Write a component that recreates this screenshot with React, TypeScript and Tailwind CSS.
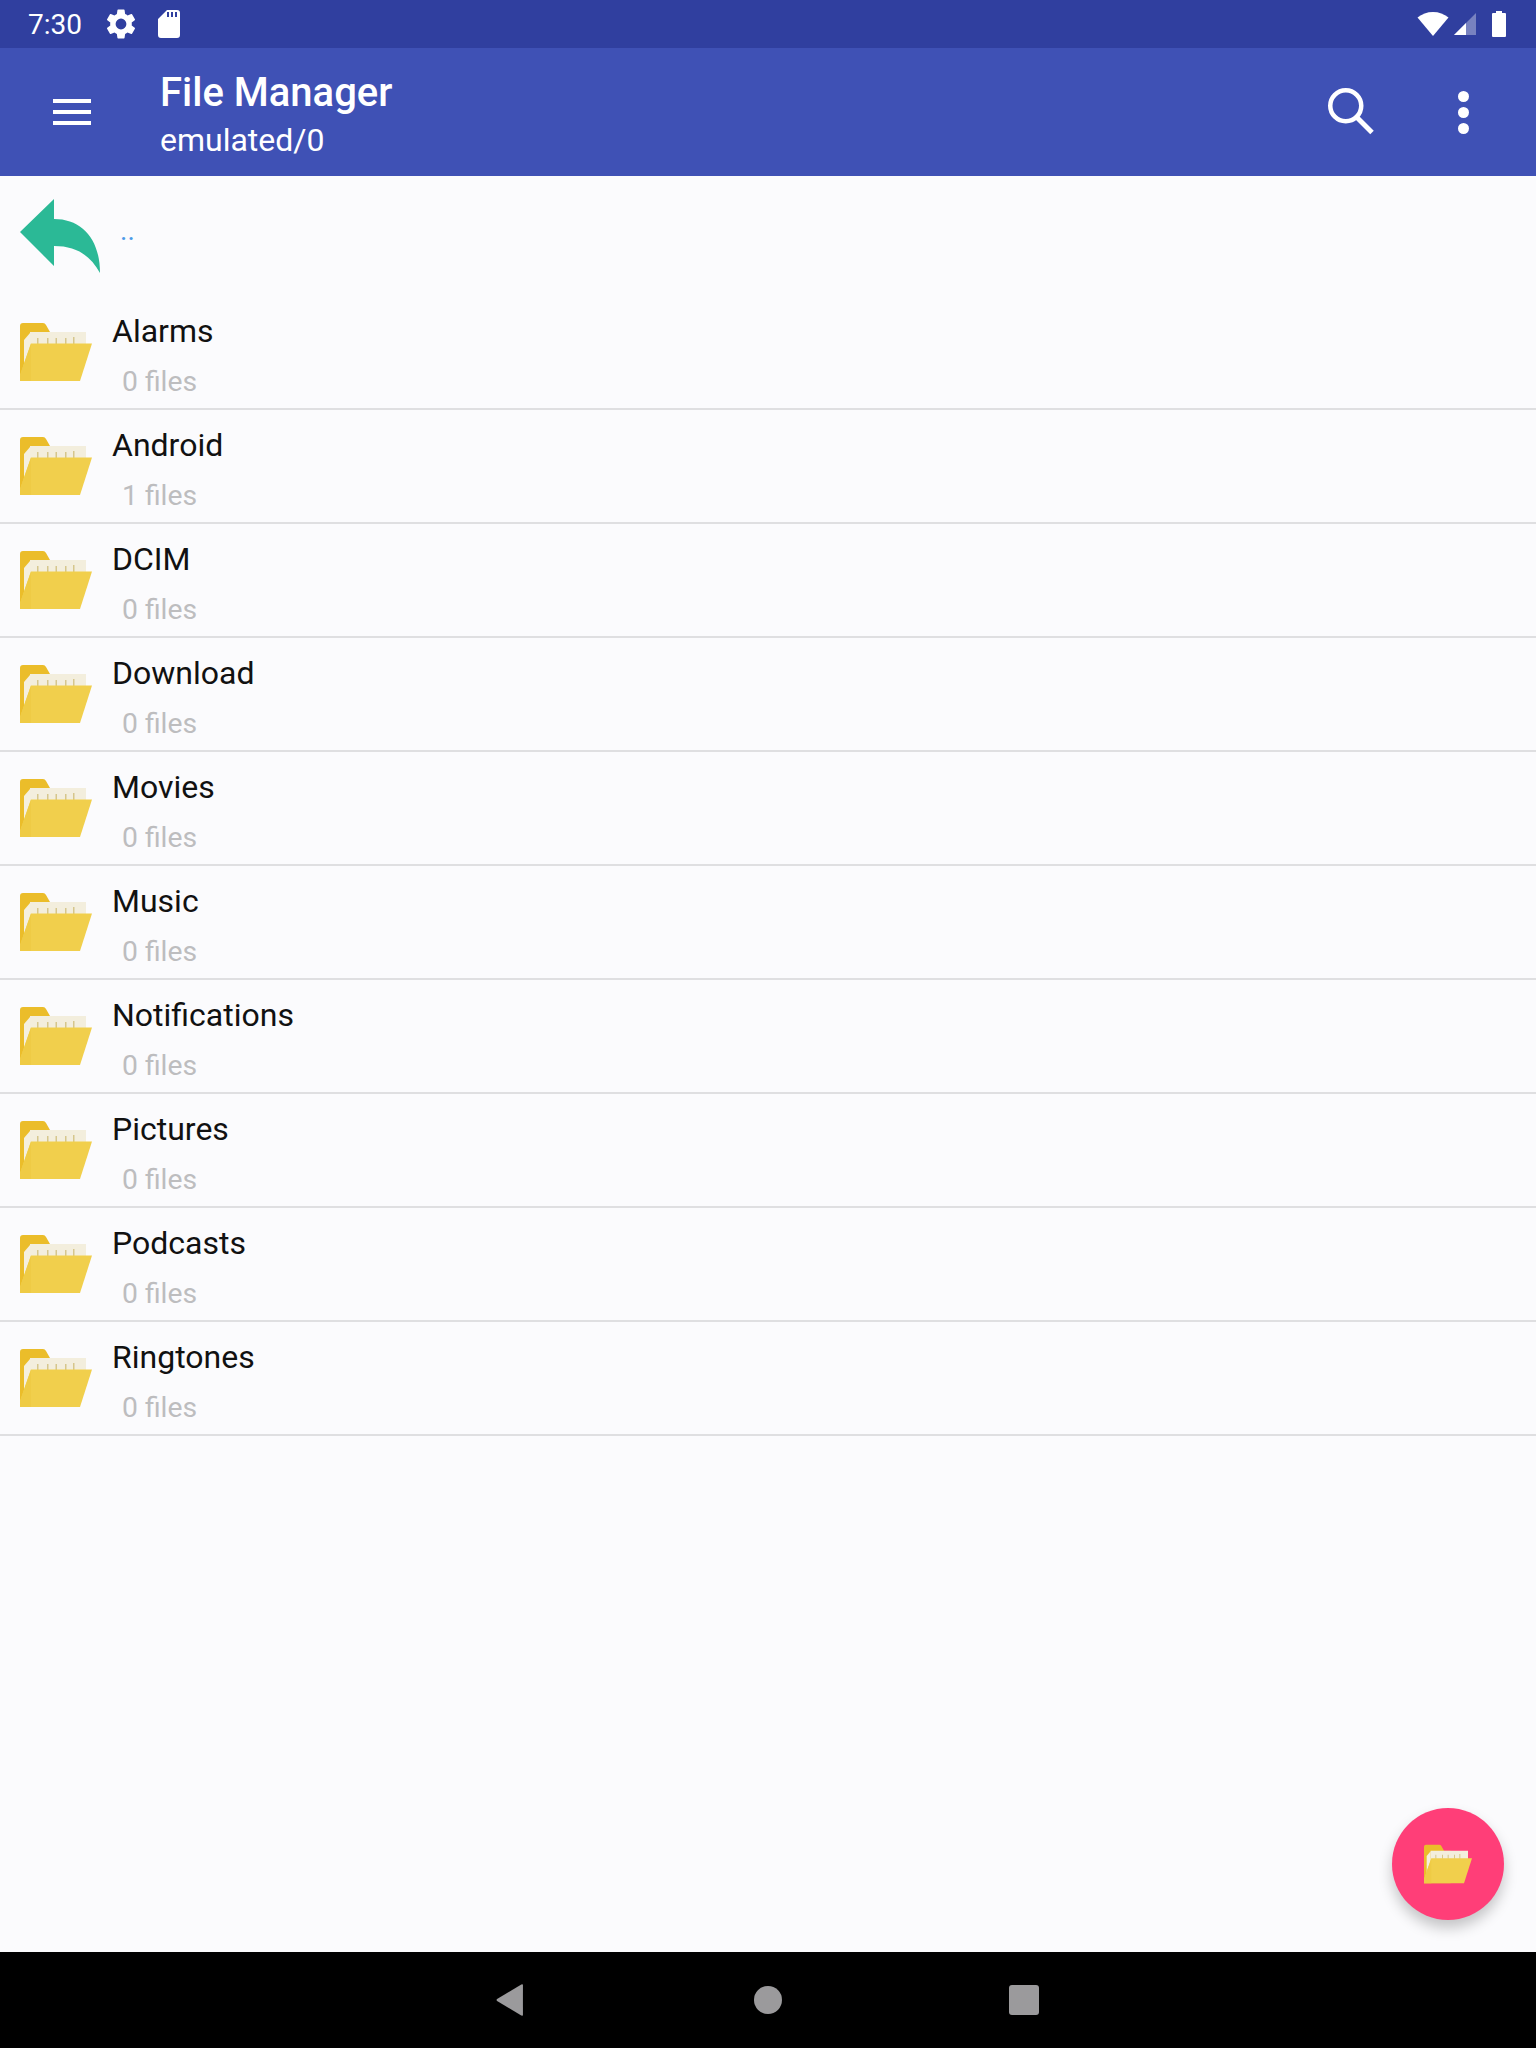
import React from "react";

function Folder({ className = "" }: { className?: string }) {
  return (
    <svg viewBox="0 0 72 58" className={className}>
      <path d="M0 58V3Q0 0 3 0H23Q25 0 26 2L30 9H40V58Z" fill="#EBBD2A" />
      <path d="M10 9H66V24H10Z" fill="#F3EEDD" />
      <path d="M4 44V17L10 10V30Z" fill="#F5F0DF" />
      <path d="M17 15h1.500v6H17zM27 15h1.500v6H27zM35.500 15h1.500v6h-1.500zM45 15h1.500v6H45zM53 14h1.500v7H53z" fill="#D6C68C" />
      <path d="M11 20.500H72L60 58H0V52Z" fill="#F1CF4C" />
      <path d="M0 52L11 20.500V58H0Z" fill="#EFCB45" />
    </svg>
  );
}

const rows = [
  ["Alarms", "0 files"],
  ["Android", "1 files"],
  ["DCIM", "0 files"],
  ["Download", "0 files"],
  ["Movies", "0 files"],
  ["Music", "0 files"],
  ["Notifications", "0 files"],
  ["Pictures", "0 files"],
  ["Podcasts", "0 files"],
  ["Ringtones", "0 files"],
];

export default function App() {
  return (
    <div className="relative flex h-[2048px] w-[1536px] flex-col overflow-hidden bg-[#FBFBFD] font-['Roboto',sans-serif]">
      <div className="flex h-12 shrink-0 items-center bg-[#303F9F] pl-7 pr-[30px] text-white">
        <span className="mt-[2px] text-[28px] leading-none">7:30</span>
        <svg viewBox="0 0 24 24" className="ml-[21px] h-9 w-9" fill="white">
          <path d="M19.14 12.94c.04-.3.06-.61.06-.94s-.02-.64-.07-.94l2.03-1.58a.49.49 0 0 0 .12-.61l-1.92-3.32a.49.49 0 0 0-.59-.22l-2.39.96a7 7 0 0 0-1.62-.94l-.36-2.54a.48.48 0 0 0-.48-.41h-3.84a.47.47 0 0 0-.47.41l-.36 2.54c-.59.24-1.13.57-1.62.94l-2.39-.96a.48.48 0 0 0-.59.22L2.74 8.87a.47.47 0 0 0 .12.61l2.03 1.58c-.05.3-.09.63-.09.94s.02.64.07.94l-2.03 1.58a.49.49 0 0 0-.12.61l1.92 3.32c.12.22.37.29.59.22l2.39-.96c.5.38 1.03.7 1.62.94l.36 2.54c.05.24.24.41.48.41h3.84c.24 0 .44-.17.47-.41l.36-2.54c.59-.24 1.13-.56 1.62-.94l2.39.96c.22.08.47 0 .59-.22l1.92-3.32a.47.47 0 0 0-.12-.61l-2.01-1.58zM12 15.6A3.6 3.6 0 1 1 12 8.4a3.6 3.6 0 0 1 0 7.2z" />
        </svg>
        <svg viewBox="0 0 22 28" className="ml-[19px] h-7 w-[22px]" fill="white">
          <path d="M9 0H19Q22 0 22 3V25Q22 28 19 28H3Q0 28 0 25V9ZM9 2V7H11V2ZM13 2V7H15V2ZM17 2V7H19V2Z" fillRule="evenodd" />
        </svg>
        <div className="flex-1" />
        <svg viewBox="0 0 32 24" className="h-6 w-8" fill="white">
          <path d="M16 24L0.500 5.500C5 2 10 0 16 0S27 2 31.500 5.500Z" />
        </svg>
        <svg viewBox="0 0 22 22" className="ml-[5px] h-[22px] w-[22px]">
          <path d="M22 0V22H0Z" fill="white" fillOpacity="0.35" />
          <path d="M12 10V22H0Z" fill="white" />
        </svg>
        <svg viewBox="0 0 14 26" className="ml-4 h-[26px] w-3.5" fill="white">
          <path d="M4 0H10V2H13Q14 2 14 3V25Q14 26 13 26H1Q0 26 0 25V3Q0 2 1 2H4Z" />
        </svg>
      </div>

      <header className="flex h-32 shrink-0 items-center bg-[#3F51B5] text-white">
        <div className="ml-[53px] flex w-[38px] flex-col gap-[7px]">
          <span className="h-1 bg-white" />
          <span className="h-1 bg-white" />
          <span className="h-1 bg-white" />
        </div>
        <div className="ml-[69px] mt-1 flex flex-col">
          <span className="text-[40px] font-medium leading-[46px]">File Manager</span>
          <span className="mt-[5px] text-[32px] leading-[38px]">emulated/0</span>
        </div>
        <div className="flex-1" />
        <svg viewBox="0 0 48 48" className="mr-[84px] h-12 w-12" fill="none" stroke="white">
          <circle cx="19.750" cy="17.750" r="15.500" strokeWidth="4.500" />
          <path d="M30.500 29L46 44.500" strokeWidth="5" />
        </svg>
        <div className="mr-[66px] flex w-3 flex-col gap-[5px]">
          <span className="h-[11px] w-[11px] rounded-full bg-white" />
          <span className="h-[11px] w-[11px] rounded-full bg-white" />
          <span className="h-[11px] w-[11px] rounded-full bg-white" />
        </div>
      </header>

      <main className="flex-1">
        <div className="flex h-[120px] items-start pl-5 pt-[23px]">
          <svg viewBox="0 0 80 74" className="h-[74px] w-20">
            <path d="M34 0V20C62 20 80 40 80 74C70 56 56 47 34 47V67L0 33Z" fill="#2BB996" />
          </svg>
          <span className="ml-[20px] mt-[13px] text-[28px] leading-[38px] text-[#4A9AE8]">..</span>
        </div>
        {rows.map(([name, sub]) => (
          <div key={name} className="flex h-[114px] border-b-2 border-[#DFDFE1] pl-5">
            <Folder className="mt-[27px] h-[58px] w-[72px]" />
            <div className="ml-[20px] flex flex-col">
              <span className="mt-4 text-[32px] leading-[38px] text-[#111111]">{name}</span>
              <span className="ml-[10px] mt-[15px] text-[28.3px] leading-[34px] text-[#BDBDBF]">{sub}</span>
            </div>
          </div>
        ))}
      </main>

      <div className="absolute left-[1392px] top-[1808px] flex h-28 w-28 items-center justify-center rounded-full bg-[#FF3E78] shadow-[0_8px_14px_rgba(0,0,0,0.22)]">
        <Folder className="h-10 w-12" />
      </div>

      <nav className="flex h-24 shrink-0 items-center justify-center gap-0 bg-black">
        <div className="relative h-12 w-full">
          <svg viewBox="0 0 26 32" className="absolute left-[496px] top-[8px] h-8 w-7" preserveAspectRatio="none" fill="#9B9A9C">
            <path d="M25 1V31Q25 32 23.500 31.500L1 17Q0 16 1 15L23.500 0.500Q25 0 25 1Z" />
          </svg>
          <span className="absolute left-[754px] top-[10px] h-7 w-7 rounded-full bg-[#9B9A9C]" />
          <span className="absolute left-[1009px] top-[9px] h-[30px] w-[30px] rounded-[3px] bg-[#9B9A9C]" />
        </div>
      </nav>
    </div>
  );
}
